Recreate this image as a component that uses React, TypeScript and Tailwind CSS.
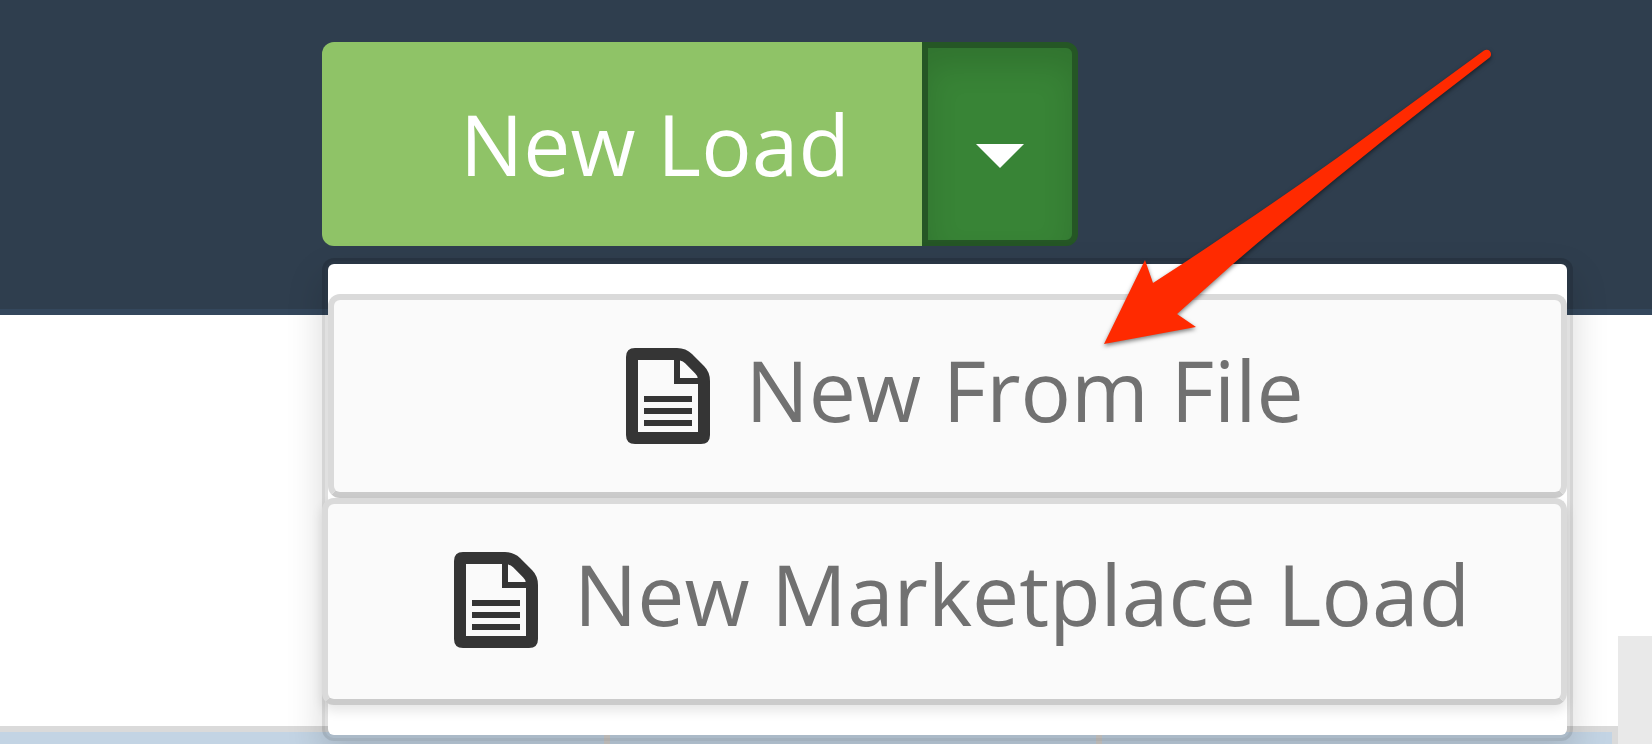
interface MenuItemProps {
  label: string;
  className: string;
}

function FileIcon() {
  return (
    <svg
      viewBox="0 0 14 16"
      className="h-24 w-[84px] shrink-0 fill-[#353535]"
      aria-hidden="true"
    >
      <path
        fillRule="evenodd"
        d="M1.5 0H8.5Q10 0 11 1L13 3Q14 4 14 5.5V14.5Q14 16 12.5 16H1.5Q0 16 0 14.5V1.5Q0 0 1.5 0ZM2 2V14H12V6H8V2ZM9 2.1V5H11.95Q11.9 4.6 11.5 4.2L9.9 2.6Q9.5 2.2 9 2.1Z"
      />
      <path d="M3 8h8v1H3zM3 10h8v1H3zM3 12h8v1H3z" />
    </svg>
  );
}

function MenuItem({ label, className }: MenuItemProps) {
  return (
    <button
      type="button"
      role="menuitem"
      className={`
        flex
        items-center
        justify-center
        gap-9
        whitespace-nowrap
        rounded-xl
        border-[6px]
        border-[#dadada]
        border-b-[#cbcbcb]
        bg-[#fafafa]
        pt-[30px]
        text-[84px]
        leading-[120px]
        text-[#717171]
        ${className}
      `}
    >
      <FileIcon />
      <span className="pb-3">{label}</span>
    </button>
  );
}

function PointerArrow() {
  return (
    <svg
      viewBox="0 0 400 310"
      className="
        pointer-events-none
        absolute
        left-[1100px]
        top-10
        z-20
        h-[310px]
        w-[400px]
        overflow-visible
        fill-[#ff2a00]
        drop-shadow-[0_2px_2px_rgba(0,0,0,0.5)]
      "
      aria-hidden="true"
    >
      <path d="M4 304 45 220 53 243Q92 218 130 192Q184 156 237 118L384 10.500C389 7.500 394 14 389 18Q334 60 280 103Q236 138 193 174Q163 198 133 224L77 274 96 287Z" />
    </svg>
  );
}

export default function App() {
  return (
    <div className="relative flex min-h-screen flex-col overflow-hidden bg-white font-['Open_Sans','Noto_Sans',sans-serif]">
      <header className="h-[315px] border-b-[6px] border-[#34475c] bg-[#2f3e4e] pl-[322px] pt-[42px]">
        <div className="relative flex w-fit">
          <button
            type="button"
            className="
              h-[204px]
              whitespace-nowrap
              rounded-l-xl
              bg-[#8fc367]
              pl-[138px]
              pr-[72px]
              text-[84px]
              leading-[120px]
              text-white
            "
          >
            New Load
          </button>
          <button
            type="button"
            aria-label="More load options"
            aria-expanded="true"
            className="
              flex
              h-[204px]
              w-[156px]
              items-center
              justify-center
              rounded-r-xl
              border-[6px]
              border-[#255625]
              bg-[#388436]
              pt-6
              shadow-[inset_0_18px_30px_rgba(0,0,0,0.125)]
            "
          >
            <svg
              viewBox="0 0 48 24"
              className="h-6 w-12 fill-white"
              aria-hidden="true"
            >
              <path d="M0 0h48L24 24z" />
            </svg>
          </button>

          <div
            className="
              absolute
              left-0
              top-full
              z-10
              mt-3
              rounded-xl
              border-[3px]
              border-black/5
              bg-black/12
              p-[3px]
              shadow-[0_18px_36px_rgba(0,0,0,0.15)]
            "
          >
            <div
              role="menu"
              className="flex flex-col rounded-md bg-white py-[30px]"
            >
              <MenuItem label="New From File" className="pb-[30px] pl-[34px]" />
              <MenuItem
                label="New Marketplace Load"
                className="-ml-[6px] pb-[33px] pl-[126px] pr-[91px] shadow-[0_6px_12px_rgba(0,0,0,0.1)]"
              />
            </div>
          </div>
        </div>
      </header>

      <main className="flex flex-1 items-end">
        <div className="flex h-[18px] flex-1 border-r-[6px] border-t-[6px] border-[#dadada] bg-[#c3d4e4]">
          <div className="w-[610px] border-r-[6px] border-[#d3d1ce]" />
          <div className="w-[492px] border-r-[6px] border-[#d3d1ce]" />
        </div>
        <div className="h-[108px] w-[34px] bg-[#e9e9e9]" />
      </main>

      <PointerArrow />
    </div>
  );
}
